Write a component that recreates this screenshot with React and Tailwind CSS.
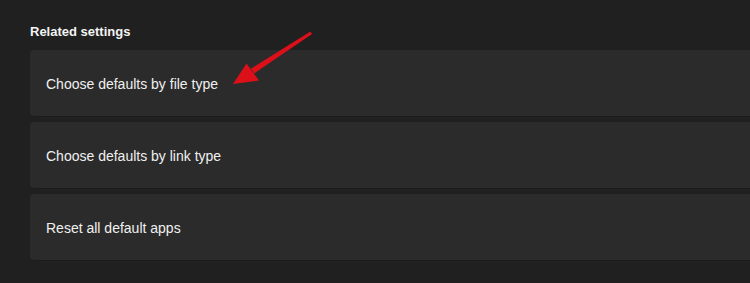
import React from 'react'

const items = ['Choose defaults by file type', 'Choose defaults by link type', 'Reset all default apps']

const App = () => {
  return (
    <div className='relative w-[750px] h-[283px] overflow-hidden bg-[#202020] font-["Liberation_Sans",sans-serif]'>
      <div className='pl-[30px] pt-[22px]'>
        <p className='text-[13px] leading-[20px] font-bold text-[#f3f3f3]'>Related settings</p>
        <div className='mt-[8px] flex flex-col gap-[5px] -mr-[10px]'>
          {items.map((t) => (
            <div key={t} className='h-[67px] flex items-center pl-4 pt-[2px] rounded-[4px] bg-[#2b2b2b] border-b border-[#1c1c1c]'>
              <p className='text-[14px] text-[#f0f0f0]'>{t}</p>
            </div>
          ))}
        </div>
      </div>
      {/* red annotation arrow */}
      <svg className='absolute left-0 top-0' width='750' height='283' viewBox='0 0 750 283'>
        <polygon points='310.5,31.5 312,34 254,73.5 251,68.5' fill='#dc1019' />
        <polygon points='233,84 246.5,63.5 259,80.5' fill='#dc1019' />
      </svg>
    </div>
  )
}

export default App
